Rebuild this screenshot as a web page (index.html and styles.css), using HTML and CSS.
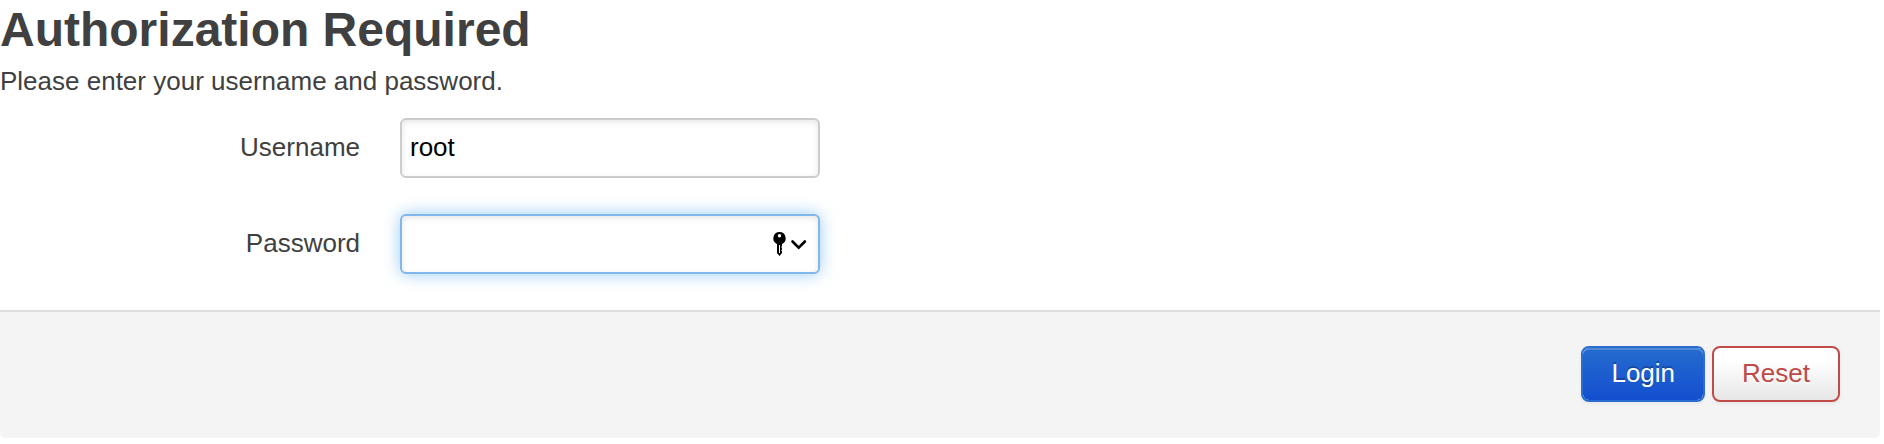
FILE: index.html
```
<!DOCTYPE html>
<html lang="en">
<head>
<meta charset="utf-8">
<meta name="viewport" content="width=device-width, initial-scale=1">
<title>Authorization Required</title>
<link rel="stylesheet" href="styles.css">
</head>
<body>
<main>
  <form class="login">
    <h2 class="title">Authorization Required</h2>
    <p class="description">Please enter your username and password.</p>
    <div class="fields">
      <div class="row">
        <label class="label" for="username">Username</label>
        <div class="field"><input class="input" id="username" type="text" value="root" autocomplete="username"></div>
      </div>
      <div class="row">
        <label class="label" for="password">Password</label>
        <div class="field">
          <input class="input input-active" id="password" type="password" autocomplete="current-password">
          <svg class="key" viewBox="0 0 34 25" aria-hidden="true">
            <path fill-rule="evenodd" d="M6.500 0A6.300 6.300 0 0 0 4 12V21L6.500 24L9 21V19.500L8.200 18.500L9 17.500V16L8.200 15L9 14V12A6.300 6.300 0 0 0 6.500 0ZM6.500 2A1.700 1.700 0 1 1 6.500 5.400A1.700 1.700 0 0 1 6.500 2ZM6 13H7V21H6Z"/>
            <path d="M19.500 9.500L25.700 15.700L31.900 9.500" fill="none" stroke="#000" stroke-width="2.600" stroke-linecap="round"/>
          </svg>
        </div>
      </div>
    </div>
    <div class="actions">
      <button class="button primary" type="submit">Login</button>
      <button class="button reset" type="reset">Reset</button>
    </div>
  </form>
</main>
</body>
</html>
```
FILE: styles.css
```
* {
  box-sizing: border-box;
}

body {
  margin: 0;
  background: #fff;
  color: #404040;
  font: 26px/36px "Helvetica Neue", Helvetica, "Liberation Sans", Arial, sans-serif;
}

.login {
  margin-right: 4px;
}

.title {
  margin: 0;
  padding-top: 3px;
  font-size: 48px;
  line-height: 54px;
}

.description {
  margin: 0;
  padding-top: 6px;
}

.fields {
  display: grid;
  gap: 36px;
  padding: 19px 0 36px;
}

.row {
  display: flex;
  gap: 40px;
}

.label {
  width: 360px;
  padding-top: 11px;
  text-align: right;
}

.field {
  position: relative;
  width: 420px;
}

.input {
  display: block;
  width: 100%;
  height: 60px;
  padding: 8px 8px 10px;
  border: 2px solid #ccc;
  border-radius: 6px;
  outline: none;
  background: #fff;
  box-shadow: inset 0 2px 6px rgba(0, 0, 0, 0.1);
  color: #000;
  font: inherit;
}

.input-active,
.input:focus {
  border-color: #82b7ec;
  box-shadow: inset 0 2px 6px rgba(0, 0, 0, 0.1), 0 0 16px rgba(82, 168, 236, 0.6);
}

.key {
  position: absolute;
  top: 18px;
  right: 13px;
  width: 34px;
  height: 25px;
}

.actions {
  display: flex;
  justify-content: flex-end;
  gap: 7px;
  padding: 34px 40px 36px;
  border-top: 2px solid #ddd;
  border-radius: 0 0 6px 6px;
  background: #f4f4f4;
}

.button {
  height: 56px;
  padding: 0 28px 2px;
  border: 2px solid;
  border-radius: 8px;
  font: inherit;
}

.primary {
  border-color: #2a6cd0;
  background: linear-gradient(#246bce, #144fcf) padding-box;
  box-shadow: inset 0 2px 0 rgba(255, 255, 255, 0.2), 0 2px 4px rgba(0, 0, 0, 0.05);
  color: #fff;
  text-shadow: 0 -2px 0 rgba(0, 0, 0, 0.25);
}

.reset {
  border-color: #c04c49;
  background: linear-gradient(#fff, #fff 25%, #e6e6e6) padding-box;
  box-shadow: 0 2px 4px rgba(0, 0, 0, 0.05);
  color: #bd4a47;
  text-shadow: 0 2px 2px rgba(255, 255, 255, 0.75);
}
```
